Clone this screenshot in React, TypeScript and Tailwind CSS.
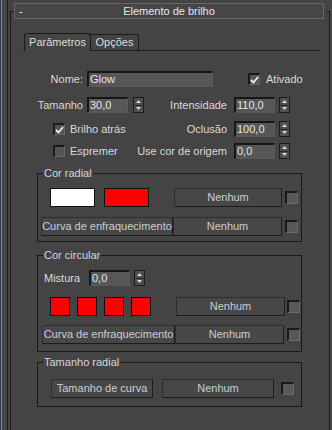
import React from "react";

const txt = "text-[#dadada]";

const Field = ({ value, w }: { value: string; w: string }) => (
  <div
    className={`${w} h-[16px] bg-[#575757] border-t-2 border-l-2 border-[#161616] border-b border-r border-b-[#5a5a5a] border-r-[#5a5a5a] pl-[1px] leading-[13px] text-[#e4e4e4] overflow-hidden whitespace-nowrap`}
  >
    {value}
  </div>
);

const Spinner = () => (
  <div className="w-[11px] h-[16px] flex flex-col border border-[#1c1c1c] bg-[#4e4e4e]">
    <div className="flex-1 flex items-center justify-center border-b border-[#2a2a2a]">
      <svg width="5" height="3" viewBox="0 0 5 3">
        <path d="M2.5 0 L5 3 L0 3 Z" fill="#d8d8d8" />
      </svg>
    </div>
    <div className="flex-1 flex items-center justify-center">
      <svg width="5" height="3" viewBox="0 0 5 3">
        <path d="M0 0 L5 0 L2.5 3 Z" fill="#d8d8d8" />
      </svg>
    </div>
  </div>
);

const Check = ({ on }: { on?: boolean }) => (
  <div className="w-[12px] h-[12px] bg-[#555555] border-t-2 border-l-2 border-[#1a1a1a] border-b border-r border-b-[#666] border-r-[#666] flex items-center justify-center">
    {on && (
      <svg width="9" height="8" viewBox="0 0 9 8">
        <path d="M1 4 L3.5 6.5 L8 1" stroke="#f2f2f2" strokeWidth="1.8" fill="none" />
      </svg>
    )}
  </div>
);

const MapBox = ({ ml }: { ml: string }) => (
  <div className={`${ml} w-[13px] h-[13px] bg-[#585858] border-t-2 border-l-2 border-[#1a1a1a] border-b border-r border-b-[#6a6a6a] border-r-[#6a6a6a]`} />
);

const Btn = ({ label, w, ml = "" }: { label: string; w: string; ml?: string }) => (
  <div
    className={`${w} ${ml} h-[19px] bg-[#474747] border border-[#2e2e2e] border-b-[#1c1c1c] border-r-[#1c1c1c] flex items-center justify-center text-[#c9ced6] whitespace-nowrap overflow-hidden`}
  >
    {label}
  </div>
);

const Swatch = ({ color, w, ml }: { color: string; w: string; ml: string }) => (
  <div className={`${w} ${ml} h-[19px] border border-[#111] ${color}`} />
);

const Group = ({ title, mt, pb, children }: { title: string; mt: string; pb: string; children: React.ReactNode }) => (
  <fieldset className={`${mt} ${pb} ml-[26px] w-[265px] border border-[#1a1a1a]`}>
    <legend className="ml-[5px] px-[1px] leading-[13px] text-[#d2d6dc]">{title}</legend>
    {children}
  </fieldset>
);

export default function App() {
  return (
    <div className="w-[332px] h-[430px] bg-[#444444] flex overflow-hidden font-['Liberation_Sans',Arial,sans-serif] text-[11px]">
      <div className="w-px bg-[#333a46]" />
      <div className="w-px bg-[#7387a3]" />
      <div className="w-[5px]" />
      <div className="w-px bg-[#1e1e1e]" />
      <div className="w-[2px]" />

      {/* rollout */}
      <div className="mt-[11px] w-[320px] border-l border-r border-[#1b1b1b] relative flex flex-col">
        <span className="absolute top-0 left-0 w-[3px] h-px bg-[#1b1b1b]" />
        <span className="absolute top-0 right-0 w-[2px] h-px bg-[#1b1b1b]" />

        <div className="-mt-[8px] ml-[3px] mr-[5px] h-[16px] border border-[#676767] bg-[#464646] flex items-center relative">
          <span className="absolute left-[4px] top-[1px] text-[#e6e6e6] leading-[12px]">-</span>
          <span className="flex-1 text-center text-[#e6e6e6] leading-[14px]">Elemento de brilho</span>
        </div>

        {/* tabs */}
        <div className="mt-[14px] h-[18px] pl-[12px] mr-[9px] flex">
          <div className="w-px border-b border-[#1b1b1b]" />
          <div className="w-[67px] h-[18px] border-l border-t border-r border-[#1b1b1b] rounded-t-[3px] flex items-center justify-center text-[#dcdcdc]">
            Parâmetros
          </div>
          <div className="w-[48px] h-[17px] mt-[1px] border-t border-r border-b border-[#1b1b1b] rounded-tr-[3px] flex items-center justify-center text-[#dcdcdc]">
            Opções
          </div>
          <div className="flex-1 border-b border-[#1b1b1b]" />
        </div>

        {/* Nome */}
        <div className={`mt-[20px] h-[16px] flex items-center ${txt}`}>
          <div className="w-[72px] text-right">Nome:</div>
          <div className="ml-[4px]">
            <Field value="Glow" w="w-[126px]" />
          </div>
          <div className="ml-[35px]">
            <Check on />
          </div>
          <span className="ml-[6px]">Ativado</span>
        </div>

        {/* Tamanho / Intensidade */}
        <div className={`mt-[10px] h-[16px] flex items-center ${txt}`}>
          <div className="w-[72px] text-right">Tamanho</div>
          <div className="ml-[4px]">
            <Field value="30,0" w="w-[41px]" />
          </div>
          <div className="ml-[5px]">
            <Spinner />
          </div>
          <div className="w-[83px] text-right">Intensidade</div>
          <div className="ml-[7px]">
            <Field value="110,0" w="w-[41px]" />
          </div>
          <div className="ml-[4px]">
            <Spinner />
          </div>
        </div>

        {/* Brilho atrás / Oclusão */}
        <div className={`mt-[8px] h-[16px] flex items-center ${txt}`}>
          <div className="w-[133px] flex items-center">
            <div className="ml-[42px]">
              <Check on />
            </div>
            <span className="ml-[5px]">Brilho atrás</span>
          </div>
          <div className="w-[83px] text-right">Oclusão</div>
          <div className="ml-[7px]">
            <Field value="100,0" w="w-[41px]" />
          </div>
          <div className="ml-[4px]">
            <Spinner />
          </div>
        </div>

        {/* Espremer / Use cor de origem */}
        <div className={`mt-[6px] h-[16px] flex items-center ${txt}`}>
          <div className="w-[133px] flex items-center">
            <div className="ml-[42px]">
              <Check />
            </div>
            <span className="ml-[5px]">Espremer</span>
          </div>
          <div className="w-[83px] text-right whitespace-nowrap flex justify-end">Use cor de origem</div>
          <div className="ml-[7px]">
            <Field value="0,0" w="w-[41px]" />
          </div>
          <div className="ml-[4px]">
            <Spinner />
          </div>
        </div>

        <Group title="Cor radial" mt="mt-[8px]" pb="pb-[5px]">
          <div className="mt-[8px] flex items-center">
            <Swatch color="bg-white" w="w-[45px]" ml="ml-[12px]" />
            <Swatch color="bg-[#ff0000]" w="w-[45px]" ml="ml-[9px]" />
            <Btn label="Nenhum" w="w-[108px]" ml="ml-[25px]" />
            <MapBox ml="ml-[3px]" />
          </div>
          <div className="mt-[10px] flex items-center">
            <Btn label="Curva de enfraquecimento" w="w-[132px]" ml="ml-[3px]" />
            <Btn label="Nenhum" w="w-[109px]" />
            <MapBox ml="ml-[3px]" />
          </div>
        </Group>

        <Group title="Cor circular" mt="mt-[7px]" pb="pb-[7px]">
          <div className={`mt-[8px] h-[16px] flex items-center ${txt}`}>
            <div className="ml-[6px] w-[45px]">Mistura</div>
            <Field value="0,0" w="w-[41px]" />
            <div className="ml-[4px]">
              <Spinner />
            </div>
          </div>
          <div className="mt-[11px] flex items-center">
            <Swatch color="bg-[#ff0000]" w="w-[20px]" ml="ml-[12px]" />
            <Swatch color="bg-[#ff0000]" w="w-[20px]" ml="ml-[7px]" />
            <Swatch color="bg-[#ff0000]" w="w-[20px]" ml="ml-[7px]" />
            <Swatch color="bg-[#ff0000]" w="w-[20px]" ml="ml-[7px]" />
            <Btn label="Nenhum" w="w-[109px]" ml="ml-[25px]" />
            <MapBox ml="ml-[2px]" />
          </div>
          <div className="mt-[9px] flex items-center">
            <Btn label="Curva de enfraquecimento" w="w-[133px]" ml="ml-[4px]" />
            <Btn label="Nenhum" w="w-[109px]" />
            <MapBox ml="ml-[3px]" />
          </div>
        </Group>

        <Group title="Tamanho radial" mt="mt-[4px]" pb="pb-[8px]">
          <div className="mt-[10px] flex items-center">
            <Btn label="Tamanho de curva" w="w-[102px]" ml="ml-[13px]" />
            <Btn label="Nenhum" w="w-[112px]" ml="ml-[9px]" />
            <MapBox ml="ml-[7px]" />
          </div>
        </Group>
      </div>
    </div>
  );
}
